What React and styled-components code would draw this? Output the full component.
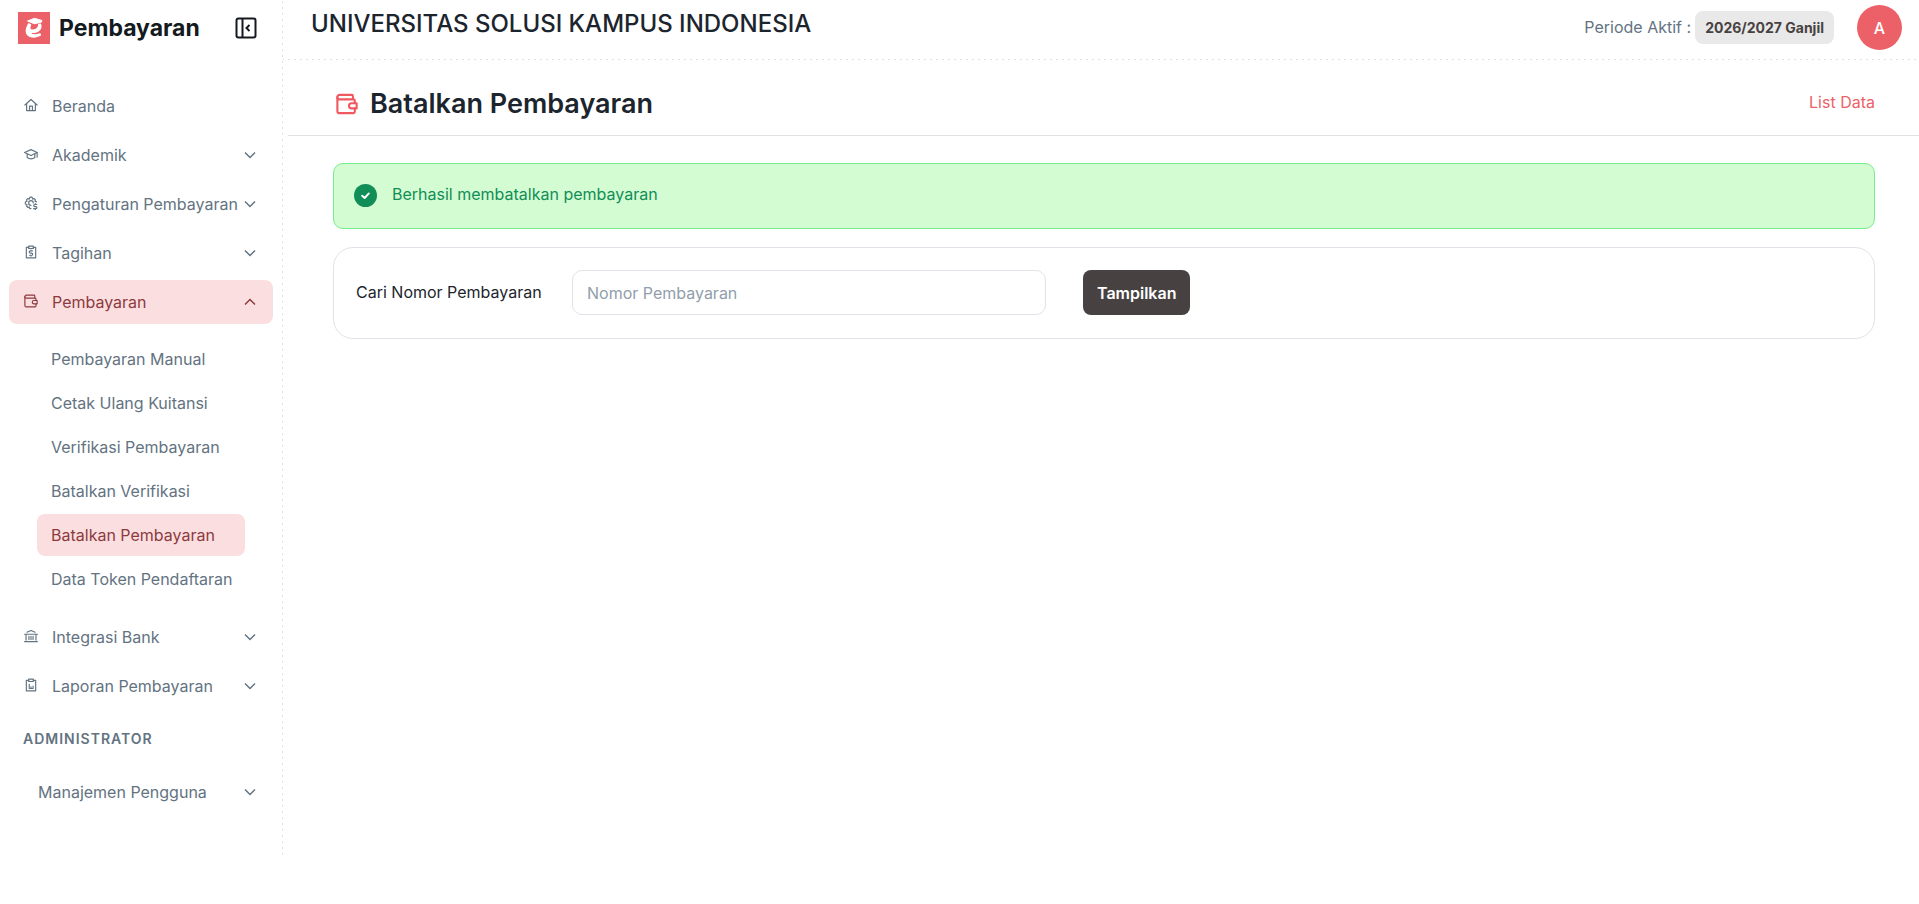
import React from 'react';
import styled, { createGlobalStyle } from 'styled-components';

const GlobalStyle = createGlobalStyle`
  *, *::before, *::after {
    box-sizing: border-box;
  }

  body {
    margin: 0;
    background: #fff;
    color: #1c252e;
    font-family: Inter, "Liberation Sans", sans-serif;
    font-size: 16px;
    line-height: 24px;
  }

  button, input {
    font: inherit;
  }

  a {
    color: inherit;
    text-decoration: none;
  }
`;

const PageDiv = styled.div`
  display: flex;
  align-items: flex-start;
  min-height: 100vh;
`;

const SidebarAside = styled.aside`
  flex: 0 0 283px;
  min-width: 0;
  min-height: 95vh;
  padding: 0 10px 45px 9px;
  background: repeating-linear-gradient(to bottom, transparent 0 1px, #dfe1e4 1px 3px, transparent 3px 6px) right top / 1px 100% no-repeat;
`;

const BrandDiv = styled.div`
  display: flex;
  align-items: center;
  height: 56px;
  margin-bottom: 28px;
  padding: 0 16px 0 9px;
`;

const BrandLink = styled.a`
  display: flex;
  align-items: center;
  gap: 9px;
  flex: 1;
  font-size: 23px;
  font-weight: 700;
  line-height: 32px;
  color: #141a21;
`;

const IconButton = styled.button`
  display: flex;
  padding: 0;
  border: 0;
  background: none;
  color: #141a21;
  cursor: pointer;
`;

const MenuUl = styled.ul`
  display: flex;
  flex-direction: column;
  gap: 5px;
  margin: 0;
  padding: 0;
  list-style: none;
`;

const MenuLink = styled.a`
  display: flex;
  align-items: center;
  height: 44px;
  padding: 0 17px 0 ${(props) => (props.$plain ? '29px' : '15px')};
  border-radius: 8px;
  background: ${(props) => (props.$active ? '#fbdfe0' : 'transparent')};
  color: ${(props) => (props.$active ? '#8d3a3f' : '#637381')};
  white-space: nowrap;
`;

const MenuIconSpan = styled.span`
  display: flex;
  padding: 0 14px 2px 0;
`;

const MenuTextSpan = styled.span`
  flex: 1;
`;

const SubmenuUl = styled.ul`
  display: flex;
  flex-direction: column;
  gap: 2px;
  margin: 0;
  padding: 14px 28px 10px;
  list-style: none;
`;

const SubmenuLink = styled.a`
  display: flex;
  align-items: center;
  height: 42px;
  padding: 0 10px 0 14px;
  border-radius: 8px;
  background: ${(props) => (props.$active ? '#fbdfe0' : 'transparent')};
  color: ${(props) => (props.$active ? '#8d3a3f' : '#637381')};
  white-space: nowrap;
`;

const SectionTitleP = styled.p`
  margin: 20px 0;
  padding-left: 14px;
  font-size: 14px;
  font-weight: 600;
  letter-spacing: 1px;
  line-height: 22px;
  color: #637381;
`;

const ContentDiv = styled.div`
  flex: 1;
  min-width: 0;
`;

const TopbarHeader = styled.header`
  display: flex;
  align-items: flex-start;
  justify-content: space-between;
  height: 60px;
  padding: 5px 17px 0 28px;
  background: repeating-linear-gradient(to right, #dfe1e4 0 1px, transparent 1px 5px, #dfe1e4 5px 6px) left bottom / 100% 1px no-repeat;
`;

const CampusH2 = styled.h2`
  margin: 0;
  padding-top: 3px;
  font-size: 24px;
  font-weight: 500;
  line-height: 32px;
`;

const PeriodDiv = styled.div`
  display: flex;
  align-items: center;
  color: #637381;
`;

const PeriodLabelSpan = styled.span`
  padding-bottom: 2px;
`;

const PeriodBadgeSpan = styled.span`
  margin: 0 23px 0 4px;
  padding: 4px 10px;
  border-radius: 8px;
  background: #e9e9e9;
  color: #474241;
  font-size: 14px;
  font-weight: 700;
  line-height: 25px;
`;

const AvatarButton = styled.button`
  width: 45px;
  height: 45px;
  padding: 0;
  border: 0;
  border-radius: 50%;
  background: #ec6167;
  color: #fff;
  font-weight: 500;
  cursor: pointer;
`;

const TitleBarDiv = styled.div`
  display: flex;
  align-items: center;
  justify-content: space-between;
  height: 76px;
  margin-left: 5px;
  padding: 8px 44px 0 48px;
  border-bottom: 1px solid #dfe1e4;
`;

const TitleH1 = styled.h1`
  display: flex;
  align-items: center;
  gap: 12px;
  margin: 0;
  padding-top: 5px;
  font-size: 27px;
  font-weight: 600;
  line-height: 36px;

  svg {
    color: #f0595f;
  }
`;

const ListLink = styled.a`
  color: #ec6167;
`;

const BodyMain = styled.main`
  display: flex;
  flex-direction: column;
  gap: 18px;
  padding: 27px 44px 40px 50px;
`;

const AlertDiv = styled.div`
  display: flex;
  align-items: flex-start;
  gap: 15px;
  min-height: 66px;
  padding: 18px 20px;
  border: 1px solid #77ed8b;
  border-radius: 10px;
  background: #d3fcd2;
  color: #118d57;

  svg {
    margin-top: 2px;
  }
`;

const SearchForm = styled.form`
  display: grid;
  grid-template-columns: 179px minmax(0, 474px) auto;
  justify-content: start;
  align-items: center;
  column-gap: 37px;
  padding: 22px 22px 23px;
  border: 1px solid #dfe3e8;
  border-radius: 20px;
`;

const FieldLabel = styled.label`
  padding-bottom: 2px;
  white-space: nowrap;
`;

const TextInput = styled.input`
  width: 100%;
  height: 45px;
  padding: 0 14px;
  border: 1px solid #dfe3e8;
  border-radius: 10px;
  background: #fff;
  color: #1c252e;

  &::placeholder {
    color: #919eab;
    opacity: 1;
  }
`;

const SubmitButton = styled.button`
  height: 45px;
  padding: 0 14px;
  border: 0;
  border-radius: 8px;
  background: #474241;
  color: #fff;
  font-weight: 600;
  cursor: pointer;
`;

const iconPaths = {
  home: (
    <>
      <path d="M1.500 12 12 2.500 22.500 12" />
      <path d="M4.500 10v11.500h15V10" />
      <path d="M9.500 21v-7h5v7" />
    </>
  ),
  cap: (
    <>
      <path d="M1 9.500 12 4.500l10.500 5L12 14.500 1 9.500Z" />
      <path d="M5.500 12v6c3.500 3 9.500 3 13 0v-6" />
      <path d="M22.500 9.500v8" />
    </>
  ),
  gear: (
    <>
      <path d="M12 21.500H9.800l-.8-2.800-2.200 1-2.500-2.500 1-2.300-3-1.100v-3.600l3-1.100-1-2.400 2.500-2.400 2.300 1L10.200 2h3.600l1 3.300 2.400-1 2.500 2.400-1 2.400 2.800 1" />
      <path d="M12 16a4 4 0 1 1 4-4" />
      <path d="M22 14.500h-3.500a1.800 1.800 0 0 0 0 3.600h1.800a1.800 1.800 0 0 1 0 3.600H16.500M19.400 13v1.500M19.400 21.700V23" />
    </>
  ),
  bill: (
    <>
      <path d="M8 4H4v18h16V4h-4" />
      <path d="M8 2h8v4H8z" />
      <path d="M14.500 10h-3.500a1.700 1.700 0 0 0 0 3.800h2a1.700 1.700 0 0 1 0 3.800H9.500M12 8.500V10M12 17.600V19" />
    </>
  ),
  wallet: (
    <>
      <path d="M18.500 7V3.500A1.500 1.500 0 0 0 17 2H4a2.500 2.500 0 0 0 0 5h15a1.500 1.500 0 0 1 1.500 1.500V11" />
      <path d="M1.500 4.500v15A2.500 2.500 0 0 0 4 22h15a1.500 1.500 0 0 0 1.500-1.500V17" />
      <path d="M22.500 11.200v5.600H17a2.800 2.800 0 0 1 0-5.600h5.500Z" />
    </>
  ),
  bank: (
    <>
      <path d="M5 5.500 12 2.500l7 3M1 9h22M3.500 9v10M20.500 9v10M1 21.500h22" />
      <path d="M8.500 12.500V18M12 12.500V18M15.500 12.500V18" />
    </>
  ),
  report: (
    <>
      <path d="M8 4H4v18h16V4h-4" />
      <path d="M8 2h8v4H8z" />
      <path d="M9 11v7h3v-3M12 18h3.500v-4" />
    </>
  ),
};

function Icon({ name, size = 14, strokeWidth = 2 }) {
  return (
    <svg
      width={size}
      height={size}
      viewBox="0 0 24 24"
      fill="none"
      stroke="currentColor"
      strokeWidth={strokeWidth}
      strokeLinecap="round"
      strokeLinejoin="round"
      aria-hidden="true"
    >
      {iconPaths[name]}
    </svg>
  );
}

function Chevron({ up }) {
  return (
    <svg width="12" height="8" viewBox="0 0 12 8" fill="none" stroke="currentColor" strokeWidth="1.5" aria-hidden="true">
      <path d={up ? 'M1 6.500 6 1.500l5 5' : 'M1 1.500l5 5 5-5'} />
    </svg>
  );
}

function Logo() {
  return (
    <svg width="32" height="32" viewBox="0 0 32 32" aria-hidden="true">
      <rect width="32" height="32" fill="#ec6167" />
      <path d="M9.500 9 16.500 6.300 24 8.500l-.8 1.900-7 1.300L9.500 9Z" fill="#fff" stroke="#fff" strokeLinejoin="round" />
      <path
        d="M10.500 11C8 14.500 6.500 20 9 23c3 3.500 9.500 3.300 13.500.8 1.200-.8.300-3-1-2.600-3 1.300-6.700 1.400-8.200-.2 5.200.4 9.900-1.800 10.200-6.300.1-1.300-.2-2.500-.8-3.200l-2.700.6c.5 3-1.500 5.400-5.500 5.400-1.500 0-2.200-.5-2-2 .2-1 .5-2 .8-3L10.500 11Z"
        fill="#fff"
      />
    </svg>
  );
}

const mainMenu = [
  { icon: 'home', label: 'Beranda' },
  { icon: 'cap', label: 'Akademik', expandable: true },
  { icon: 'gear', label: 'Pengaturan Pembayaran', expandable: true },
  { icon: 'bill', label: 'Tagihan', expandable: true },
  {
    icon: 'wallet',
    label: 'Pembayaran',
    expandable: true,
    open: true,
    items: [
      'Pembayaran Manual',
      'Cetak Ulang Kuitansi',
      'Verifikasi Pembayaran',
      'Batalkan Verifikasi',
      'Batalkan Pembayaran',
      'Data Token Pendaftaran',
    ],
  },
  { icon: 'bank', label: 'Integrasi Bank', expandable: true },
  { icon: 'report', label: 'Laporan Pembayaran', expandable: true },
];

const adminMenu = [{ label: 'Manajemen Pengguna', expandable: true }];

function Menu({ entries }) {
  return (
    <MenuUl>
      {entries.map((entry) => (
        <li key={entry.label}>
          <MenuLink href="#" $active={entry.open} $plain={!entry.icon}>
            {entry.icon && (
              <MenuIconSpan>
                <Icon name={entry.icon} />
              </MenuIconSpan>
            )}
            <MenuTextSpan>{entry.label}</MenuTextSpan>
            {entry.expandable && <Chevron up={entry.open} />}
          </MenuLink>
          {entry.items && (
            <SubmenuUl>
              {entry.items.map((item) => (
                <li key={item}>
                  <SubmenuLink href="#" $active={item === 'Batalkan Pembayaran'}>
                    {item}
                  </SubmenuLink>
                </li>
              ))}
            </SubmenuUl>
          )}
        </li>
      ))}
    </MenuUl>
  );
}

function Sidebar() {
  return (
    <SidebarAside>
      <BrandDiv>
        <BrandLink href="#">
          <Logo />
          Pembayaran
        </BrandLink>
        <IconButton type="button" aria-label="Tutup menu">
          <svg width="22" height="22" viewBox="0 0 22 22" fill="none" stroke="currentColor" strokeWidth="2" aria-hidden="true">
            <rect x="1.500" y="1.500" width="19" height="19" rx="2" />
            <path d="M7.500 1.500v19M14.500 8l-3 3 3 3" />
          </svg>
        </IconButton>
      </BrandDiv>
      <nav>
        <Menu entries={mainMenu} />
        <SectionTitleP>ADMINISTRATOR</SectionTitleP>
        <Menu entries={adminMenu} />
      </nav>
    </SidebarAside>
  );
}

function Topbar() {
  return (
    <TopbarHeader>
      <CampusH2>UNIVERSITAS SOLUSI KAMPUS INDONESIA</CampusH2>
      <PeriodDiv>
        <PeriodLabelSpan>Periode Aktif :</PeriodLabelSpan>
        <PeriodBadgeSpan>2026/2027 Ganjil</PeriodBadgeSpan>
        <AvatarButton type="button">A</AvatarButton>
      </PeriodDiv>
    </TopbarHeader>
  );
}

function App() {
  return (
    <PageDiv>
      <GlobalStyle />
      <Sidebar />
      <ContentDiv>
        <Topbar />
        <TitleBarDiv>
          <TitleH1>
            <Icon name="wallet" size={22} strokeWidth={2.3} />
            Batalkan Pembayaran
          </TitleH1>
          <ListLink href="#">List Data</ListLink>
        </TitleBarDiv>
        <BodyMain>
          <AlertDiv role="status">
            <svg width="23" height="23" viewBox="0 0 24 24" aria-hidden="true">
              <circle cx="12" cy="12" r="12" fill="#118d57" />
              <path d="m8.500 12.200 2.600 2.400 4.400-4.800" fill="none" stroke="#fff" strokeWidth="2" strokeLinecap="round" strokeLinejoin="round" />
            </svg>
            <span>Berhasil membatalkan pembayaran</span>
          </AlertDiv>
          <SearchForm>
            <FieldLabel htmlFor="nomor">Cari Nomor Pembayaran</FieldLabel>
            <TextInput id="nomor" type="text" placeholder="Nomor Pembayaran" />
            <SubmitButton type="button">Tampilkan</SubmitButton>
          </SearchForm>
        </BodyMain>
      </ContentDiv>
    </PageDiv>
  );
}

export default App;
